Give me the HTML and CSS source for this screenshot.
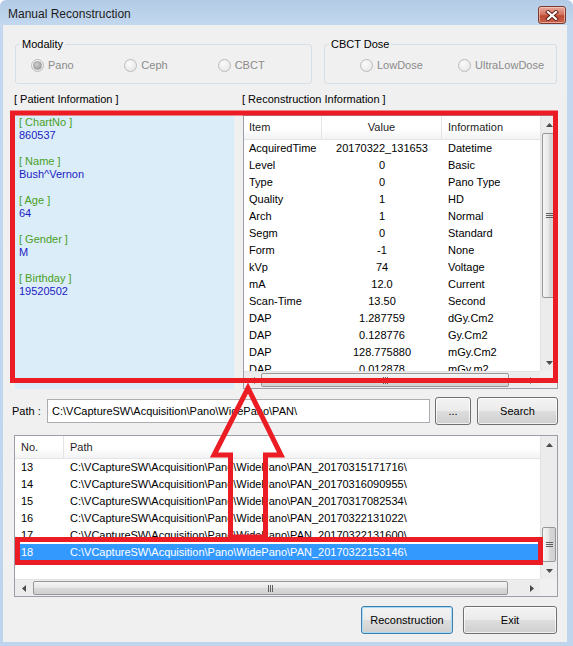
FILE: index.html
```html
<!DOCTYPE html>
<html lang="en">
<head>
    <meta charset="UTF-8">
    <title>Manual Reconstruction</title>
    <link rel="stylesheet" href="styles.css">
</head>
<body>
<div class="window">
    <div class="titlebar">
        <span class="title">Manual Reconstruction</span>
        <span class="close-btn">
            <svg width="14" height="11" viewBox="0 0 14 11">
                <path d="M3 2 L11 9 M11 2 L3 9" stroke="#5b1d14" stroke-width="4" stroke-linecap="square"/>
                <path d="M3 2 L11 9 M11 2 L3 9" stroke="#fff" stroke-width="2.2" stroke-linecap="square"/>
            </svg>
        </span>
    </div>

    <div class="client">
        <div class="groups">
            <fieldset class="group modality">
                <legend>Modality</legend>
                <div class="radios">
                    <span class="radio"><span class="dot on"></span>Pano</span>
                    <span class="radio"><span class="dot"></span>Ceph</span>
                    <span class="radio"><span class="dot"></span>CBCT</span>
                </div>
            </fieldset>
            <fieldset class="group dose">
                <legend>CBCT Dose</legend>
                <div class="radios">
                    <span class="radio"><span class="dot"></span>LowDose</span>
                    <span class="radio"><span class="dot"></span>UltraLowDose</span>
                </div>
            </fieldset>
        </div>

        <div class="captions">
            <span class="cap-patient">[ Patient Information ]</span>
            <span>[ Reconstruction Information ]</span>
        </div>

        <div class="info-row">
            <div class="patient">
                <div class="p-label">[ ChartNo ]</div>
                <div class="p-value">860537</div>
                <div class="p-label">[ Name ]</div>
                <div class="p-value">Bush^Vernon</div>
                <div class="p-label">[ Age ]</div>
                <div class="p-value">64</div>
                <div class="p-label">[ Gender ]</div>
                <div class="p-value">M</div>
                <div class="p-label">[ Birthday ]</div>
                <div class="p-value">19520502</div>
            </div>

            <div class="listview recon">
                <div class="lv-main">
                    <div class="lv-head">
                        <span class="c-item">Item</span>
                        <span class="c-value">Value</span>
                        <span class="c-info">Information</span>
                    </div>
                    <div class="lv-row"><span class="c-item">AcquiredTime</span><span class="c-value">20170322_131653</span><span class="c-info">Datetime</span></div>
                    <div class="lv-row"><span class="c-item">Level</span><span class="c-value">0</span><span class="c-info">Basic</span></div>
                    <div class="lv-row"><span class="c-item">Type</span><span class="c-value">0</span><span class="c-info">Pano Type</span></div>
                    <div class="lv-row"><span class="c-item">Quality</span><span class="c-value">1</span><span class="c-info">HD</span></div>
                    <div class="lv-row"><span class="c-item">Arch</span><span class="c-value">1</span><span class="c-info">Normal</span></div>
                    <div class="lv-row"><span class="c-item">Segm</span><span class="c-value">0</span><span class="c-info">Standard</span></div>
                    <div class="lv-row"><span class="c-item">Form</span><span class="c-value">-1</span><span class="c-info">None</span></div>
                    <div class="lv-row"><span class="c-item">kVp</span><span class="c-value">74</span><span class="c-info">Voltage</span></div>
                    <div class="lv-row"><span class="c-item">mA</span><span class="c-value">12.0</span><span class="c-info">Current</span></div>
                    <div class="lv-row"><span class="c-item">Scan-Time</span><span class="c-value">13.50</span><span class="c-info">Second</span></div>
                    <div class="lv-row"><span class="c-item">DAP</span><span class="c-value">1.287759</span><span class="c-info">dGy.Cm2</span></div>
                    <div class="lv-row"><span class="c-item">DAP</span><span class="c-value">0.128776</span><span class="c-info">Gy.Cm2</span></div>
                    <div class="lv-row"><span class="c-item">DAP</span><span class="c-value">128.775880</span><span class="c-info">mGy.Cm2</span></div>
                    <div class="lv-row"><span class="c-item">DAP</span><span class="c-value">0.012878</span><span class="c-info">mGy.m2</span></div>
                </div>
                <div class="vscroll">
                    <span class="arrow"><svg width="7" height="4"><path d="M0 4 L3.5 0 L7 4 Z" fill="#4a4a4a"/></svg></span>
                    <div class="track">
                        <div class="thumb-v recon-thumb">
                            <svg width="7" height="5"><path d="M0 0.5H7M0 2.5H7M0 4.5H7" stroke="#606060"/></svg>
                        </div>
                    </div>
                    <span class="arrow"><svg width="7" height="4"><path d="M0 0 L3.5 4 L7 0 Z" fill="#4a4a4a"/></svg></span>
                </div>
                <div class="hscroll">
                    <span class="arrow"><svg width="4" height="7"><path d="M4 0 L0 3.5 L4 7 Z" fill="#4a4a4a"/></svg></span>
                    <div class="track">
                        <div class="thumb-h recon-hthumb">
                            <svg width="5" height="7"><path d="M0.5 0V7M2.5 0V7M4.5 0V7" stroke="#606060"/></svg>
                        </div>
                    </div>
                    <span class="arrow"><svg width="4" height="7"><path d="M0 0 L4 3.5 L0 7 Z" fill="#4a4a4a"/></svg></span>
                </div>
                <div class="corner"></div>
            </div>
        </div>

        <div class="path-row">
            <span class="path-label">Path :</span>
            <div class="field">C:\VCaptureSW\Acquisition\Pano\WidePano\PAN\</div>
            <button class="btn btn-dots">...</button>
            <button class="btn btn-search">Search</button>
        </div>

        <div class="listview files">
            <div class="lv-main">
                <div class="lv-head">
                    <span class="c-no">No.</span>
                    <span class="c-path">Path</span>
                </div>
                <div class="lv-row"><span class="c-no">13</span><span class="c-path">C:\VCaptureSW\Acquisition\Pano\WidePano\PAN_20170315171716\</span></div>
                <div class="lv-row"><span class="c-no">14</span><span class="c-path">C:\VCaptureSW\Acquisition\Pano\WidePano\PAN_20170316090955\</span></div>
                <div class="lv-row"><span class="c-no">15</span><span class="c-path">C:\VCaptureSW\Acquisition\Pano\WidePano\PAN_20170317082534\</span></div>
                <div class="lv-row"><span class="c-no">16</span><span class="c-path">C:\VCaptureSW\Acquisition\Pano\WidePano\PAN_20170322131022\</span></div>
                <div class="lv-row"><span class="c-no">17</span><span class="c-path">C:\VCaptureSW\Acquisition\Pano\WidePano\PAN_20170322131600\</span></div>
                <div class="lv-row selected"><span class="c-no">18</span><span class="c-path">C:\VCaptureSW\Acquisition\Pano\WidePano\PAN_20170322153146\</span></div>
            </div>
            <div class="vscroll">
                <span class="arrow"><svg width="7" height="4"><path d="M0 4 L3.5 0 L7 4 Z" fill="#4a4a4a"/></svg></span>
                <div class="track">
                    <div class="thumb-v files-thumb">
                        <svg width="7" height="5"><path d="M0 0.5H7M0 2.5H7M0 4.5H7" stroke="#606060"/></svg>
                    </div>
                </div>
                <span class="arrow"><svg width="7" height="4"><path d="M0 0 L3.5 4 L7 0 Z" fill="#4a4a4a"/></svg></span>
            </div>
            <div class="hscroll">
                <span class="arrow"><svg width="4" height="7"><path d="M4 0 L0 3.5 L4 7 Z" fill="#4a4a4a"/></svg></span>
                <div class="track">
                    <div class="thumb-h files-hthumb">
                        <svg width="5" height="7"><path d="M0.5 0V7M2.5 0V7M4.5 0V7" stroke="#606060"/></svg>
                    </div>
                </div>
                <span class="arrow"><svg width="4" height="7"><path d="M0 0 L4 3.5 L0 7 Z" fill="#4a4a4a"/></svg></span>
            </div>
            <div class="corner"></div>
        </div>

        <div class="buttons">
            <button class="btn btn-default">Reconstruction</button>
            <button class="btn btn-exit">Exit</button>
        </div>
    </div>

    <!-- red annotation marks drawn over the dialog -->
    <svg class="marks" width="573" height="646" viewBox="0 0 573 646">
        <rect x="12.5" y="113" width="543" height="267.5" fill="none" stroke="#ec1c24" stroke-width="5"/>
        <rect x="17.5" y="539.5" width="523" height="23" fill="none" stroke="#ec1c24" stroke-width="5"/>
        <polygon points="248,388 281,455 265.5,455 265.5,537 230.5,537 230.5,455 214,455" fill="none" stroke="#ec1c24" stroke-width="5" stroke-linejoin="miter"/>
    </svg>
</div>
</body>
</html>
```

FILE: styles.css
```css
* {
    box-sizing: border-box;
}

body {
    margin: 0;
    background: #ffffff;
    font-family: "Liberation Sans", Arial, sans-serif;
    font-size: 11px;
    color: #000;
}

.window {
    position: relative;
    width: 573px;
    height: 646px;
    display: flex;
    flex-direction: column;
    background: linear-gradient(#b3cbe6, #c3d8ef 26px, #bfd5ed);
    border-radius: 6px 6px 0 0;
}

.titlebar {
    height: 25px;
    flex: none;
    display: flex;
    align-items: flex-start;
    justify-content: space-between;
    padding: 0 7px 0 8px;
}
.title {
    font-size: 12px;
    color: #1c1c1c;
    margin-top: 7px;
}
.close-btn {
    width: 28px;
    height: 18px;
    margin-top: 6px;
    display: flex;
    align-items: center;
    justify-content: center;
    border: 1px solid #7a3a30;
    border-radius: 3px;
    background: linear-gradient(#e9a99c, #d47561 45%, #c04a34 55%, #c9624a);
    box-shadow: inset 0 0 0 1px rgba(255, 220, 210, 0.55);
}

.client {
    flex: 1;
    margin: 0 6px 4px 3px;
    background: #f0f0f0;
    padding: 12px 9px 0 12px;
    display: flex;
    flex-direction: column;
}

/* group boxes */
.groups {
    display: flex;
    gap: 12px;
}
.group {
    margin: 0;
    padding: 0 0 11px;
    border: 1px solid #d5dfe5;
    border-radius: 3px;
    min-width: 0;
}
.group legend {
    margin-left: 4px;
    padding: 0 2px;
    font-size: 11px;
    line-height: 14px;
}
.modality {
    width: 297px;
}
.dose {
    width: 233px;
}
.radios {
    display: flex;
    height: 14px;
    margin-top: 7px;
    padding-left: 15px;
}
.dose .radios {
    padding-left: 35px;
}
.radio {
    width: 98px;
    display: flex;
    align-items: center;
    gap: 4px;
    color: #8b8b8b;
}
.dot {
    width: 13px;
    height: 13px;
    border-radius: 50%;
    border: 1px solid #bcbcbc;
    background: radial-gradient(circle at 40% 35%, #fbfbfb, #e2e2e2);
    display: flex;
    align-items: center;
    justify-content: center;
}
.dot.on::after {
    content: "";
    width: 7px;
    height: 7px;
    border-radius: 50%;
    border: 1px solid #a0a0a0;
    background: radial-gradient(circle at 40% 35%, #d0d0d0, #909090);
}

.captions {
    display: flex;
    margin-top: 9px;
    line-height: 13px;
}
.cap-patient {
    width: 228px;
    margin-left: -1px;
}

/* patient + reconstruction info */
.info-row {
    display: flex;
    gap: 9px;
    margin-top: 9px;
    height: 274px;
}
.patient {
    width: 219px;
    background: #dbedf9;
    padding: 1px 4px 0;
    line-height: 13px;
}
.p-label {
    color: #4aa024;
}
.p-value {
    color: #1c1cc4;
    margin-bottom: 13px;
}

/* list views */
.listview {
    background: #fff;
    border: 1px solid #9a9ea6;
    display: grid;
    grid-template-columns: minmax(0, 1fr) 17px;
    grid-template-rows: minmax(0, 1fr) 17px;
    overflow: hidden;
}
.recon {
    width: 315px;
}
.lv-main {
    overflow: hidden;
}
.lv-head {
    display: flex;
    height: 24px;
    border-bottom: 1px solid #e5e5e5;
    background: linear-gradient(#ffffff 55%, #f2f3f5);
    white-space: nowrap;
}
.files .lv-head {
    height: 23px;
}
.lv-head span {
    flex: none;
    line-height: 22px;
    border-right: 1px solid #e3e4e6;
    color: #1e1e1e;
}
.lv-row {
    display: flex;
    height: 17px;
    line-height: 17px;
    white-space: nowrap;
}
.lv-row span {
    flex: none;
}
.c-item {
    width: 78px;
    padding-left: 5px;
}
.c-value {
    width: 120px;
    text-align: center;
}
.c-info {
    width: 110px;
    padding-left: 6px;
}
.c-no {
    width: 49px;
    padding-left: 6px;
}
.c-path {
    width: 560px;
    padding-left: 6px;
}
.lv-row.selected {
    background: #3399ff;
    color: #fff;
    margin-left: 4px;
}
.lv-row.selected .c-no {
    width: 45px;
    padding-left: 2px;
}

/* scrollbars */
.vscroll {
    display: flex;
    flex-direction: column;
    background: #ececec;
    border-left: 1px solid #e2e2e2;
}
.hscroll {
    display: flex;
    background: #ececec;
    border-top: 1px solid #e2e2e2;
}
.arrow {
    flex: none;
    width: 16px;
    height: 17px;
    display: flex;
    align-items: center;
    justify-content: center;
}
.vscroll .arrow {
    width: auto;
}
.hscroll .arrow {
    height: auto;
    width: 17px;
}
.vscroll .track {
    flex: 1;
    display: flex;
    flex-direction: column;
}
.hscroll .track {
    flex: 1;
    display: flex;
}
.thumb-v {
    margin: 0 1px;
    border: 1px solid #979797;
    border-radius: 2px;
    background: linear-gradient(90deg, #f5f5f5, #e6e6e6 50%, #d9d9d9 51%, #d0d0d0);
    display: flex;
    align-items: center;
    justify-content: center;
}
.thumb-h {
    margin: 1px 0;
    border: 1px solid #979797;
    border-radius: 2px;
    background: linear-gradient(#f5f5f5, #e6e6e6 50%, #d9d9d9 51%, #d0d0d0);
    display: flex;
    align-items: center;
    justify-content: center;
}
.recon-thumb {
    height: 165px;
}
.files-thumb {
    height: 35px;
    margin-top: auto;
}
.recon-hthumb {
    width: 248px;
}
.files-hthumb {
    width: 475px;
    margin-left: 1px;
}
.corner {
    background: #f0f0f0;
}

/* path row */
.path-row {
    display: flex;
    align-items: center;
    margin-top: 8px;
    margin-left: -3px;
    height: 28px;
}
.path-label {
    width: 35px;
}
.field {
    width: 383px;
    height: 24px;
    border: 1px solid #abadb3;
    background: #fff;
    padding-left: 4px;
    line-height: 22px;
    white-space: nowrap;
}
.btn {
    font-family: "Liberation Sans", Arial, sans-serif;
    font-size: 11px;
    color: #000;
    height: 28px;
    border: 1px solid #707070;
    border-radius: 3px;
    background: linear-gradient(#f3f3f3, #ebebeb 48%, #dddddd 52%, #cfcfcf);
    box-shadow: inset 0 0 0 1px rgba(255, 255, 255, 0.7);
    padding: 0;
}
.btn-dots {
    width: 36px;
    margin-left: 5px;
}
.btn-search {
    width: 81px;
    margin-left: 6px;
}

.files {
    margin-top: 10px;
    margin-left: -1px;
    height: 162px;
}

.buttons {
    display: flex;
    justify-content: flex-end;
    gap: 10px;
    margin-top: 9px;
    padding-right: 1px;
}
.btn-default {
    width: 92px;
    border-color: #3c7fb1;
    box-shadow: inset 0 0 0 1px #a8dcf6;
}
.btn-exit {
    width: 94px;
}

.marks {
    position: absolute;
    left: 0;
    top: 0;
    pointer-events: none;
}
```
